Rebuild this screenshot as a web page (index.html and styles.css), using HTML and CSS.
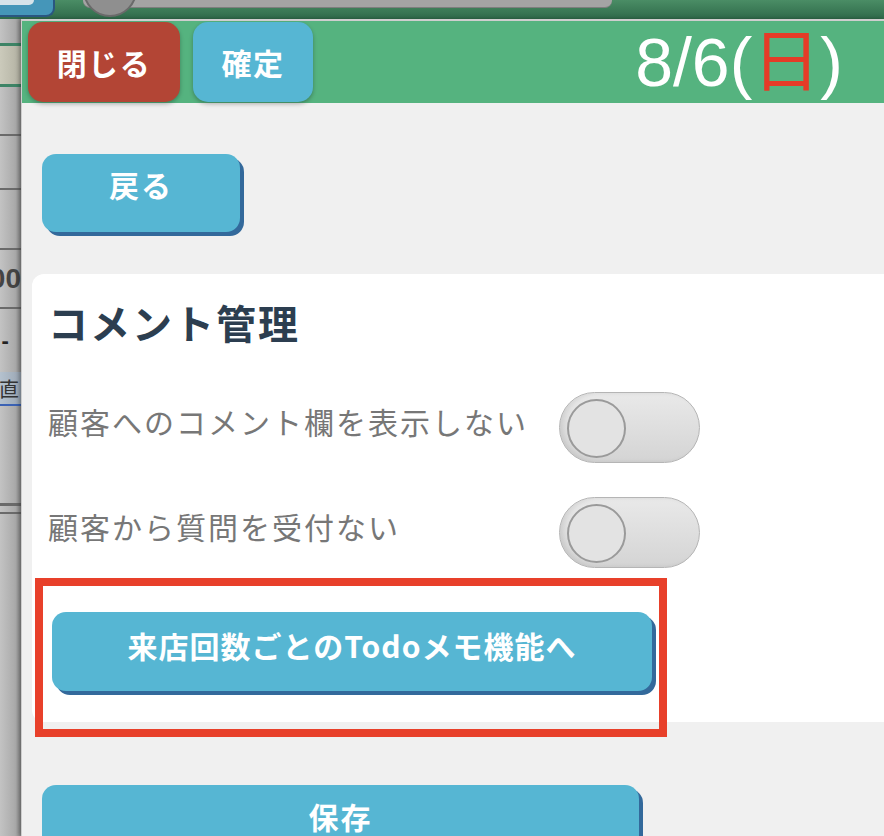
FILE: index.html
```html
<!DOCTYPE html>
<html lang="ja">
<head>
<meta charset="utf-8">
<title>コメント管理</title>
<link rel="stylesheet" href="styles.css">
</head>
<body>
  <div class="topbar">
    <div class="tab"><span class="tab-hl"></span></div>
    <div class="track"><span class="track-knob"></span></div>
  </div>
  <div class="strip">
    <div class="s-gap h24"></div>
    <div class="s-green"></div>
    <div class="s-light"></div>
    <div class="s-green"></div>
    <div class="s-gap h47"></div>
    <div class="s-line"></div>
    <div class="s-gap h52"></div>
    <div class="s-line"></div>
    <div class="s-gap h58"></div>
    <div class="s-line"></div>
    <div class="s-text h57 big">1000</div>
    <div class="s-line"></div>
    <div class="s-text h63 dash">-&nbsp;&nbsp;</div>
    <div class="s-band">Ⅱ 直</div>
    <div class="s-gap h97"></div>
    <div class="s-line thick"></div>
    <div class="s-gap h6"></div>
    <div class="s-line"></div>
  </div>
  <div class="modal">
    <header class="mhead">
      <button class="hbtn close">閉じる</button>
      <button class="hbtn ok">確定</button>
      <div class="date">8/6(<span class="sun">日</span>)</div>
    </header>
    <main class="mbody">
      <button class="btn back">戻る</button>
      <section class="card">
        <h2 class="card-title">コメント管理</h2>
        <div class="settings">
          <div class="row">
            <span class="label">顧客へのコメント欄を表示しない</span>
            <span class="switch"><span class="knob"></span></span>
          </div>
          <div class="row">
            <span class="label">顧客から質問を受付ない</span>
            <span class="switch"><span class="knob"></span></span>
          </div>
        </div>
        <div class="todo-wrap">
          <button class="btn todo">来店回数ごとのTodoメモ機能へ</button>
        </div>
      </section>
      <button class="btn save">保存</button>
    </main>
  </div>
</body>
</html>
```

FILE: styles.css
```css
html, body {
  margin: 0;
  height: 836px;
  overflow: hidden;
}

body {
  display: grid;
  grid-template-columns: 21px 1fr;
  grid-template-rows: 19px 1fr;
  background: #f0f0f0;
  font-family: "Noto Sans CJK JP", "Noto Sans", sans-serif;
}

/* dimmed page behind the modal */
.topbar {
  grid-column: 1 / -1;
  display: flex;
  align-items: flex-start;
  overflow: hidden;
  background: linear-gradient(#4a8d65, #2f6a4a);
}

.tab {
  position: relative;
  flex-shrink: 0;
  width: 55px;
  height: 17px;
  box-sizing: border-box;
  background: #4596b9;
  border-right: 2px solid #2a5680;
  border-bottom: 2px solid #2a5680;
  border-radius: 0 0 9px 0;
}

.tab-hl {
  position: absolute;
  left: 0;
  top: 0;
  width: 34px;
  height: 5px;
  background: #d6e3ea;
  border-radius: 0 0 5px 0;
}

.track {
  position: relative;
  flex-shrink: 0;
  margin-left: 28px;
  width: 529px;
  height: 7px;
  background: #a4a4a4;
  border-bottom: 1px solid #7e7e7e;
  border-radius: 0 0 7px 7px;
}

.track-knob {
  position: absolute;
  left: 0;
  top: -37px;
  width: 54px;
  height: 54px;
  box-sizing: border-box;
  border-radius: 50%;
  background: #8f8f8f;
  border: 2px solid #6a6a6a;
}

.strip {
  display: flex;
  flex-direction: column;
  overflow: hidden;
  background: linear-gradient(to right, #c3c3c3, #a9a9a9 75%, #8e8e8e);
}

.strip > * {
  flex-shrink: 0;
}

.s-gap.h24 { height: 24px; }
.s-gap.h47 { height: 47px; }
.s-gap.h52 { height: 52px; }
.s-gap.h58 { height: 58px; }
.s-gap.h97 { height: 97px; }
.s-gap.h6 { height: 6px; }

.s-green {
  height: 3px;
  background: #3d8466;
}

.s-light {
  height: 38px;
  background: linear-gradient(to right, #cbcabb, #b2b1a2);
}

.s-line {
  height: 2px;
  background: #6a6a6a;
}

.s-line.thick {
  height: 3px;
}

.s-text {
  display: flex;
  align-items: center;
  justify-content: flex-end;
  white-space: nowrap;
  color: #444;
  font-family: "Liberation Sans", sans-serif;
}

.s-text.h57 { height: 57px; }
.s-text.h63 { height: 63px; }

.s-text.big {
  font-size: 28px;
  font-weight: bold;
}

.s-text.dash {
  font-size: 22px;
  font-weight: bold;
  color: #222;
}

.s-band {
  height: 32px;
  display: flex;
  align-items: center;
  justify-content: flex-end;
  white-space: nowrap;
  font-size: 20px;
  color: #333;
  background: linear-gradient(to right, #b5c2cf, #9aa6b3);
  border-bottom: 2px solid #3b62b4;
  letter-spacing: 2px;
}

/* modal */
.modal {
  min-width: 0;
  min-height: 0;
  display: flex;
  flex-direction: column;
  background: #f0f0f0;
  border-top: 2px solid #cecece;
  border-left: 1px solid #cecece;
  box-shadow: -2px 0 4px rgba(0, 0, 0, 0.3);
  overflow: hidden;
}

.mhead {
  flex-shrink: 0;
  height: 82px;
  display: flex;
  align-items: center;
  padding: 0 41px 0 6px;
  background: #55b37f;
}

.hbtn {
  flex-shrink: 0;
  height: 80px;
  padding: 0;
  border: 0;
  border-radius: 15px;
  color: #fff;
  font: bold 30px/1 "Noto Sans CJK JP", sans-serif;
  letter-spacing: 1.5px;
  box-shadow: 0 2px 4px rgba(0, 0, 0, 0.28);
}

.hbtn.close {
  width: 152px;
  background: #b34535;
}

.hbtn.ok {
  width: 120px;
  margin-left: 13px;
  background: #56b6d3;
}

.date {
  margin-left: auto;
  margin-bottom: 6px;
  font-family: "Liberation Sans", "Noto Sans CJK JP", sans-serif;
  font-size: 68px;
  line-height: 1;
  color: #fff;
  white-space: nowrap;
}

.sun {
  font-family: "Noto Sans CJK JP", sans-serif;
  font-weight: 400;
  color: #e53b27;
}

.mbody {
  flex-shrink: 0;
  display: flex;
  flex-direction: column;
  align-items: flex-start;
  padding: 51px 0 0 20px;
}

.mbody > * {
  flex-shrink: 0;
}

.btn {
  display: flex;
  justify-content: center;
  align-items: flex-start;
  box-sizing: border-box;
  padding: 15px 0 0;
  border: 0;
  border-radius: 14px;
  background: #56b6d3;
  box-shadow: 4px 4px 0 #33699b;
  color: #fff;
  font: bold 30px/30px "Noto Sans CJK JP", sans-serif;
  letter-spacing: 2px;
  white-space: nowrap;
}

.btn.back {
  width: 198px;
  height: 78px;
}

.card {
  align-self: stretch;
  margin: 42px 0 0 -10px;
  padding: 20px 0 31px 16px;
  background: #fff;
  border-radius: 12px 0 0 12px;
}

.card-title {
  margin: 0;
  font-size: 40px;
  line-height: 56px;
  font-weight: bold;
  color: #2c3e50;
  letter-spacing: 2px;
}

.settings {
  display: flex;
  flex-direction: column;
  gap: 34px;
  margin-top: 42px;
}

.row {
  display: grid;
  grid-template-columns: 511px 141px;
  align-items: start;
}

.label {
  padding-top: 8px;
  font-size: 30px;
  line-height: 42px;
  color: #777;
  letter-spacing: 2px;
  white-space: nowrap;
}

.switch {
  width: 141px;
  height: 71px;
  box-sizing: border-box;
  display: flex;
  align-items: center;
  padding-left: 7px;
  border: 1px solid #b5b5b5;
  border-radius: 36px;
  background: linear-gradient(#e9e9e9, #d4d4d4);
  box-shadow: inset 3px 0 4px rgba(0, 0, 0, 0.08);
}

.knob {
  width: 59px;
  height: 59px;
  margin-top: 2px;
  box-sizing: border-box;
  border: 2px solid #9a9a9a;
  border-radius: 50%;
  background: #e3e3e3;
}

.todo-wrap {
  position: relative;
  width: 600px;
  margin: 44px 0 0 4px;
}

.todo-wrap::after {
  content: "";
  position: absolute;
  top: -34px;
  left: -17px;
  right: -15px;
  bottom: -46px;
  border: 8px solid #e8402a;
  pointer-events: none;
}

.btn.todo {
  width: 600px;
  height: 79px;
  padding-top: 18px;
  letter-spacing: 1px;
}

.btn.save {
  width: 597px;
  height: 79px;
  margin-top: 63px;
  padding-top: 16px;
}
```
